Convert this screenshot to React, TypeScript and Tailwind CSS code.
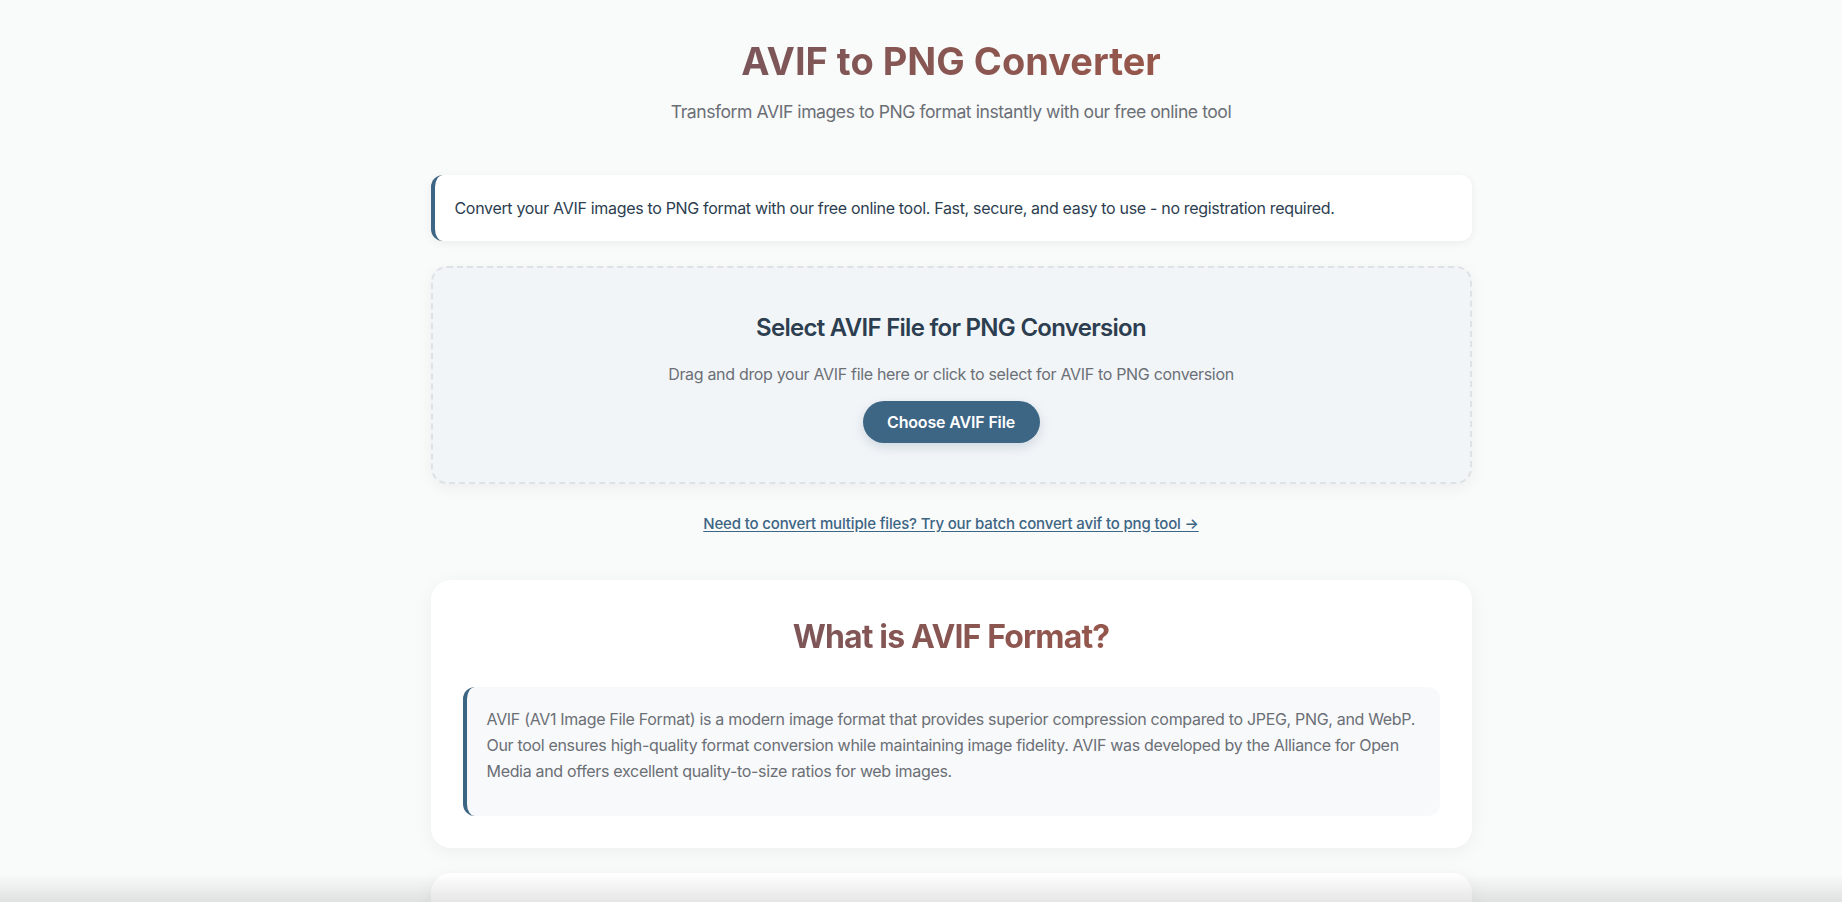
import React from 'react';

const font = { fontFamily: 'Inter, "Noto Sans", sans-serif' };

const App: React.FC = () => {
  return (
    <div className="min-h-screen bg-[#f9fafa] pl-[60px]" style={font}>
      <div className="mx-auto w-[1041px] pb-10">
        {/* Header */}
        <header className="pt-[39px] text-center">
          <h1 className="bg-gradient-to-r from-[#665463] to-[#ab553b] bg-clip-text text-[38px] font-bold leading-[1.2] text-transparent">
            AVIF to PNG Converter
          </h1>
          <p className="mt-[14px] text-[17.6px] leading-[26px] tracking-[-0.026em] text-[#6b6f76]">
            Transform AVIF images to PNG format instantly with our free online tool
          </p>
        </header>

        {/* Intro */}
        <div className="mt-[50px] rounded-xl border-l-4 border-[#3d6584] bg-white py-5 pl-5 pr-6 shadow-[0_2px_10px_rgba(0,0,0,0.06)]">
          <p className="text-base leading-[26px] tracking-[-0.02em] text-[#2c3e50]">
            Convert your AVIF images to PNG format with our free online tool. Fast, secure, and easy to use - no registration required.
          </p>
        </div>

        {/* Upload */}
        <div className="mt-[25px] rounded-2xl border-2 border-dashed border-[#dde2e7] bg-[#f2f5f8] pb-[39px] pt-[44px] text-center shadow-[0_4px_16px_rgba(0,0,0,0.05)]">
          <h2 className="text-2xl font-semibold leading-8 tracking-[-0.03em] text-[#2c3e50]">
            Select AVIF File for PNG Conversion
          </h2>
          <p className="mt-[18px] text-base leading-6 tracking-[-0.02em] text-[#6b6f76]">
            Drag and drop your AVIF file here or click to select for AVIF to PNG conversion
          </p>
          <button className="mt-[15px] h-[42px] w-[177px] rounded-full bg-[#3d6584] text-base font-semibold tracking-[-0.01em] text-white shadow-[0_4px_12px_rgba(61,101,132,0.2)]">
            Choose AVIF File
          </button>
        </div>

        {/* Batch link */}
        <div className="mt-[27px] text-center">
          <a href="#" className="text-[15px] font-medium leading-[22px] tracking-[-0.01em] text-[#3d6584] underline underline-offset-2">
            Need to convert multiple files? Try our batch convert avif to png tool →
          </a>
        </div>

        {/* What is AVIF */}
        <section className="mt-[45px] rounded-[20px] bg-white p-8 shadow-[0_4px_20px_rgba(0,0,0,0.05)]">
          <h2 className="mt-[6px] bg-gradient-to-r from-[#665463] to-[#ab553b] bg-clip-text text-center text-[32px] font-bold leading-[1.2] tracking-[-0.027em] text-transparent">
            What is AVIF Format?
          </h2>
          <div className="mt-[31px] rounded-xl border-l-4 border-[#3d6584] bg-[#f8f9fa] pb-[32px] pl-5 pr-5 pt-[19px]">
            <p className="text-base leading-[26px] tracking-[-0.02em] text-[#6b6f76]">
              AVIF (AV1 Image File Format) is a modern image format that provides superior compression compared to JPEG, PNG, and WebP. Our tool ensures high-quality format conversion while maintaining image fidelity. AVIF was developed by the Alliance for Open Media and offers excellent quality-to-size ratios for web images.
            </p>
          </div>
        </section>

        {/* Next section */}
        <section className="mt-[25px] h-[300px] rounded-[20px] bg-white shadow-[0_4px_20px_rgba(0,0,0,0.05)]" />
      </div>

      {/* Bottom fade */}
      <div className="pointer-events-none fixed bottom-0 left-0 right-0 h-[28px] bg-gradient-to-t from-black/10 to-transparent" />
    </div>
  );
};

export default App;
